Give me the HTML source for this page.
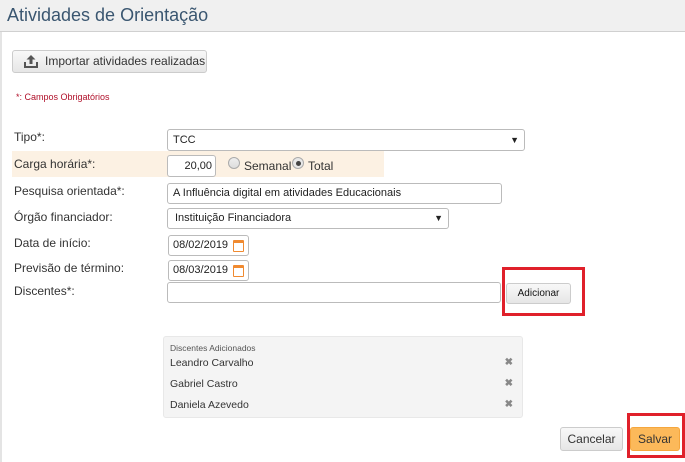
<!DOCTYPE html>
<html><head><meta charset="utf-8"><style>
*{box-sizing:border-box;margin:0;padding:0}
body{width:685px;height:462px;background:#fff;font-family:"Liberation Sans",sans-serif;font-size:12px;color:#333;position:relative;overflow:hidden}
.a{position:absolute}
.hdr{left:0;top:0;width:685px;height:32px;background:#f0f0f0;border-bottom:1px solid #d0d0d0}
.hdr span{position:absolute;left:7px;top:5px;font-size:18px;color:#3a5670}
.lb{left:0;top:32px;width:2px;height:430px;background:#e4e4e4}
.btn{border:1px solid #ccc;border-radius:3px;background:linear-gradient(#f8f8f8,#e6e6e6);text-align:center;color:#333}
.inp{border:1px solid #bbb;border-radius:3px;background:#fff;font-size:11px;padding-left:5px;line-height:19px;color:#222}
.lab{left:14px;font-size:12px;color:#333}
.arrow{position:absolute;right:5px;top:0;font-size:9px;color:#222}
.cal{position:absolute;right:4px;top:4px;width:11px;height:12px;border:1.5px solid #f08a30;border-top-width:3px;border-radius:1px}
.x{position:absolute;right:9px;font-size:10px;color:#888;font-weight:bold}
.red{border:3px solid #e0202a}
</style></head><body>
<div class="a hdr"><span>Atividades de Orientação</span></div>
<div class="a lb"></div>
<div class="a btn" style="left:12px;top:50px;width:195px;height:23px;line-height:21px;font-size:12px;text-align:left;padding-left:32px">Importar atividades realizadas
<svg style="position:absolute;left:10px;top:3px" width="16" height="15" viewBox="0 0 16 15"><path d="M8 1 L3.5 5.5 H6.5 V10 H9.5 V5.5 H12.5 Z" fill="#555"/><path d="M1 8 V14 H15 V8 H13 V12 H3 V8 Z" fill="#555"/></svg></div>
<div class="a" style="left:16px;top:92px;font-size:9px;color:#b0102a">*: Campos Obrigatórios</div>

<div class="a lab" style="top:130px">Tipo*:</div>
<div class="a inp" style="left:167px;top:129px;width:358px;height:22px;line-height:21px">TCC<span class="arrow">▼</span></div>

<div class="a" style="left:12px;top:151px;width:372px;height:26px;background:#fcf1e3"></div>
<div class="a lab" style="top:157px">Carga horária*:</div>
<div class="a inp" style="left:167px;top:155px;width:49px;height:22px;line-height:21px;text-align:right;padding-right:3px">20,00</div>
<div class="a" style="left:228px;top:157px;width:12px;height:12px;border-radius:50%;border:1px solid #aaa;background:linear-gradient(#eee,#ddd)"></div>
<div class="a" style="left:244px;top:159px">Semanal</div>
<div class="a" style="left:292px;top:157px;width:12px;height:12px;border-radius:50%;border:1px solid #aaa;background:#e8e8e8"><div style="width:5px;height:5px;border-radius:50%;background:#444;margin:2.5px"></div></div>
<div class="a" style="left:308px;top:159px">Total</div>

<div class="a lab" style="top:184px">Pesquisa orientada*:</div>
<div class="a inp" style="left:167px;top:183px;width:335px;height:21px">A Influência digital em atividades Educacionais</div>

<div class="a lab" style="top:210px">Órgão financiador:</div>
<div class="a inp" style="left:167px;top:208px;width:282px;height:21px;padding-left:7px">Instituição Financiadora<span class="arrow">▼</span></div>

<div class="a lab" style="top:236px">Data de início:</div>
<div class="a inp" style="left:168px;top:235px;width:81px;height:21px;padding-left:4px">08/02/2019<span class="cal"></span></div>
<div class="a lab" style="top:261px">Previsão de término:</div>
<div class="a inp" style="left:168px;top:260px;width:81px;height:21px;padding-left:4px">08/03/2019<span class="cal"></span></div>

<div class="a lab" style="top:284px">Discentes*:</div>
<div class="a inp" style="left:167px;top:282px;width:334px;height:21px"></div>
<div class="a btn" style="left:506px;top:283px;width:65px;height:21px;line-height:19px;font-size:10px;color:#111">Adicionar</div>
<div class="a red" style="left:502px;top:267px;width:83px;height:49px"></div>

<div class="a" style="left:163px;top:336px;width:360px;height:82px;background:#f4f4f4;border:1px solid #e8e8e8;border-radius:3px">
<div class="a" style="left:6px;top:6px;font-size:8.5px;color:#555">Discentes Adicionados</div>
<div class="a" style="left:6px;top:20px;font-size:10.5px">Leandro Carvalho</div>
<div class="a" style="left:6px;top:41px;font-size:10.5px">Gabriel Castro</div>
<div class="a" style="left:6px;top:62px;font-size:10.5px">Daniela Azevedo</div>
<span class="x" style="top:20px">✖</span><span class="x" style="top:41px">✖</span><span class="x" style="top:62px">✖</span>
</div>

<div class="a btn" style="left:560px;top:427px;width:63px;height:24px;line-height:22px">Cancelar</div>
<div class="a" style="left:630px;top:427px;width:50px;height:24px;line-height:22px;text-align:center;background:#fcb95a;border:1px solid #f5a73e;border-radius:3px;color:#333">Salvar</div>
<div class="a red" style="left:627px;top:413px;width:58px;height:45px"></div>
</body></html>
